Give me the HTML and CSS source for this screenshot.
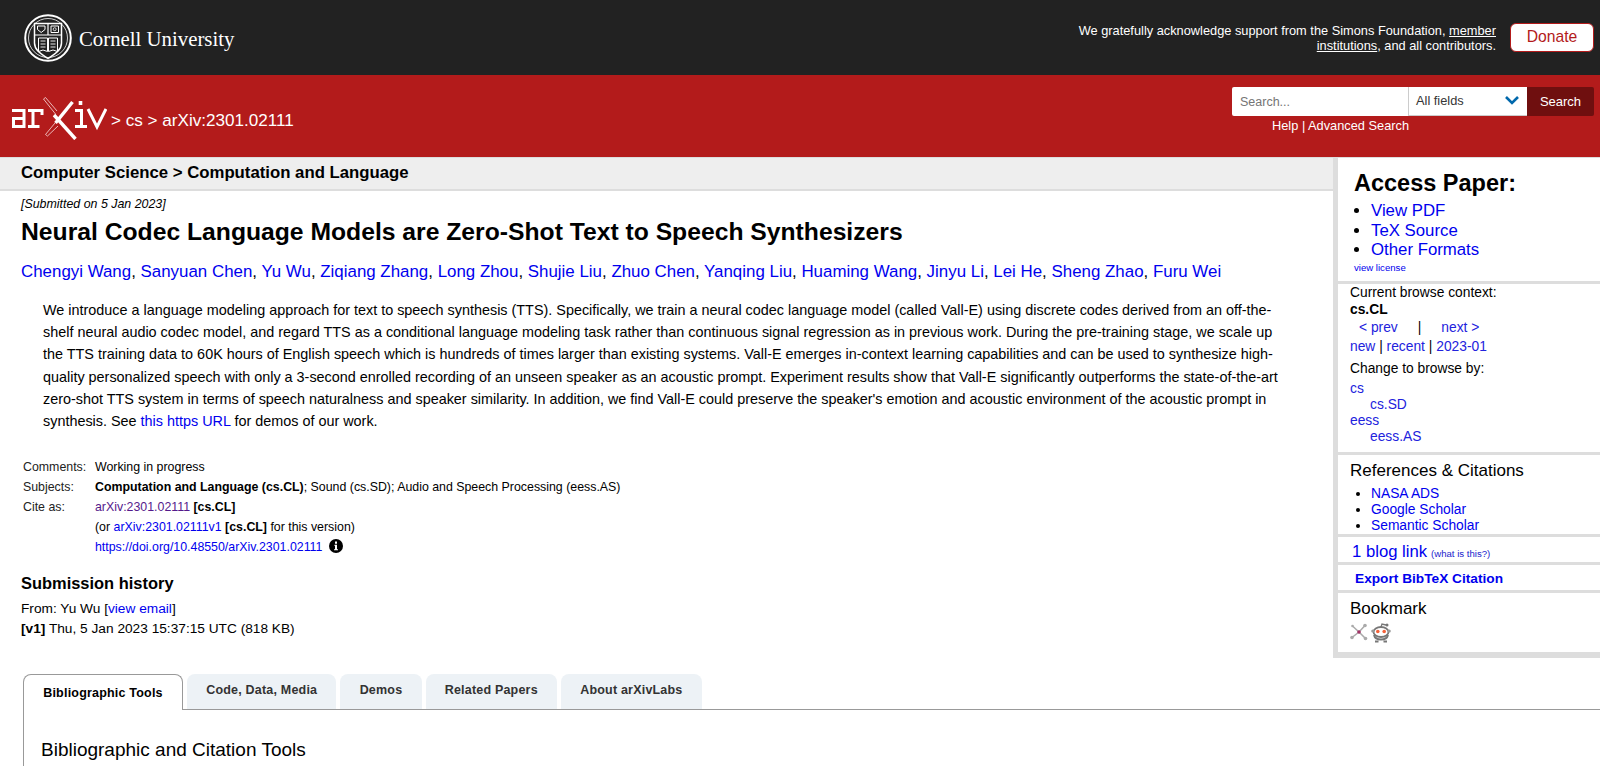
FILE: index.html
```html
<!DOCTYPE html>
<html lang="en">
  <head>
    <meta charset="UTF-8" />
    <title>Neural Codec Language Models are Zero-Shot Text to Speech Synthesizers</title>
    <link rel="stylesheet" href="styles.css">
  </head>

  <body>
    <header class="cu-banner">
      <a class="cu-logo" href="#">
        <svg class="cu-seal" width="48" height="48" viewBox="0 0 48 48" fill="none" stroke="#fff">
          <circle cx="24" cy="24" r="22.800" stroke-width="2" />
          <circle cx="24" cy="24" r="19.500" stroke-width="0.800" />
          <path d="M10.500 9.500H37.500V29C37.500 37 29 41 24 44.500C19 41 10.500 37 10.500 29Z" stroke-width="1.500" />
          <path d="M10.500 21H37.500M24 9.500V21" stroke-width="1.200" />
          <path d="M13.500 12H21V15.500L17.200 18.500L13.500 15.500ZM27 12H34.500V18.500H27Z" stroke-width="1" />
          <circle cx="30.700" cy="15.200" r="1.500" stroke-width="0.800" />
          <path d="M14.500 24H23.500V37.500L19 36L14.500 37.500ZM24.500 24H33.500V37.500L29 36L24.500 37.500Z" stroke-width="1" />
          <path d="M16.500 27H21.500M16.500 30H21.500M16.500 33H21.500M26.500 27H31.500M26.500 30H31.500M26.500 33H31.500" stroke-width="0.900" />
        </svg>
        <span class="cu-name">Cornell University</span>
      </a>
      <div class="support">
        <p class="support-text">We gratefully acknowledge support from the Simons Foundation, <a href="#">member institutions</a>, and all contributors.</p>
        <a class="donate" href="#">Donate</a>
      </div>
    </header>

    <div class="arxiv-bar">
      <div class="crumbs">
        <svg class="arxiv-logo" width="97" height="44" viewBox="0 0 97 44" fill="none" stroke="#fff" stroke-width="3">
          <path d="M2 14.500H14V30.500H3.500V22.500H14" />
          <path d="M18 14.500H32V19M23 14.500V30.500M18 30.500H29.500" />
          <path d="M65 14.500H71.500V30.500M65 30.500H77" />
          <path d="M70.500 5V9" stroke-width="3.600" />
          <path d="M78 13L87 31L96 13" />
          <path d="M44 19L65.500 43" stroke-width="3.400" />
          <path d="M62.500 6L45.500 27" stroke-width="3.400" />
          <path d="M45.500 18L33.500 3L35.500 1.500L47 15" stroke-width="0.900" stroke="#f0c8c8" />
          <path d="M45 27L35.500 38.500L37.500 40L48 30" stroke-width="0.900" stroke="#f0c8c8" />
        </svg>
        <span class="crumb-text">&gt; cs &gt; arXiv:2301.02111</span>
      </div>
      <div class="search-block">
        <form class="search-form">
          <input class="search-input" type="text" placeholder="Search..." />
          <div class="search-select">
            <span>All fields</span>
            <svg width="16" height="10" viewBox="0 0 16 10" fill="none" stroke="#0068ac" stroke-width="2.600"><path d="M2 2L8 8L14 2" /></svg>
          </div>
          <button class="search-btn" type="button">Search</button>
        </form>
        <div class="search-help"><a href="#">Help</a> | <a href="#">Advanced Search</a></div>
      </div>
    </div>

    <div class="page">
      <main class="abs">
        <div class="subheader">Computer Science &gt; Computation and Language</div>
        <div class="abs-body">
          <div class="dateline">[Submitted on 5 Jan 2023]</div>
          <h1 class="title">Neural Codec Language Models are Zero-Shot Text to Speech Synthesizers</h1>
          <div class="authors">
            <a href="#">Chengyi Wang</a>, <a href="#">Sanyuan Chen</a>, <a href="#">Yu Wu</a>, <a href="#">Ziqiang Zhang</a>, <a href="#">Long Zhou</a>, <a href="#">Shujie Liu</a>, <a href="#">Zhuo Chen</a>, <a href="#">Yanqing Liu</a>, <a href="#">Huaming Wang</a>, <a href="#">Jinyu Li</a>, <a href="#">Lei He</a>, <a href="#">Sheng Zhao</a>, <a href="#">Furu Wei</a>
          </div>
          <blockquote class="abstract">
            We introduce a language modeling approach for text to speech synthesis (TTS). Specifically, we train a neural codec language model (called Vall-E) using discrete codes derived from an off-the-shelf neural audio codec model, and regard TTS as a conditional language modeling task rather than continuous signal regression as in previous work. During the pre-training stage, we scale up the TTS training data to 60K hours of English speech which is hundreds of times larger than existing systems. Vall-E emerges in-context learning capabilities and can be used to synthesize high-quality personalized speech with only a 3-second enrolled recording of an unseen speaker as an acoustic prompt. Experiment results show that Vall-E significantly outperforms the state-of-the-art zero-shot TTS system in terms of speech naturalness and speaker similarity. In addition, we find Vall-E could preserve the speaker's emotion and acoustic environment of the acoustic prompt in synthesis. See <a href="#">this https URL</a> for demos of our work.
          </blockquote>
          <div class="meta">
            <div class="meta-label">Comments:</div>
            <div class="meta-value">Working in progress</div>
            <div class="meta-label">Subjects:</div>
            <div class="meta-value"><b>Computation and Language (cs.CL)</b>; Sound (cs.SD); Audio and Speech Processing (eess.AS)</div>
            <div class="meta-label">Cite as:</div>
            <div class="meta-value"><a class="visited" href="#">arXiv:2301.02111</a> <b>[cs.CL]</b></div>
            <div class="meta-label"></div>
            <div class="meta-value">(or <a href="#">arXiv:2301.02111v1</a> <b>[cs.CL]</b> for this version)</div>
            <div class="meta-label"></div>
            <div class="meta-value doi">
              <a href="#">https://doi.org/10.48550/arXiv.2301.02111</a>
              <svg width="14" height="14" viewBox="0 0 14 14">
                <circle cx="7" cy="7" r="7" fill="#000" />
                <path d="M5.500 5.800H8V10.200H9V11.300H5V10.200H6V6.900H5.500Z M6 2.600H8V4.700H6Z" fill="#fff" />
              </svg>
            </div>
          </div>
          <h2 class="history-title">Submission history</h2>
          <div class="history">
            From: Yu Wu [<a href="#">view email</a>]<br />
            <b>[v1]</b> Thu, 5 Jan 2023 15:37:15 UTC (818 KB)
          </div>
        </div>
      </main>

      <aside class="extra">
        <section class="box access">
          <h2>Access Paper:</h2>
          <ul>
            <li><a href="#">View PDF</a></li>
            <li><a href="#">TeX Source</a></li>
            <li><a href="#">Other Formats</a></li>
          </ul>
          <a class="license" href="#">view license</a>
        </section>
        <section class="box browse">
          <div>Current browse context:</div>
          <div class="context"><b>cs.CL</b></div>
          <div class="prevnext"><a href="#">&lt;&nbsp;prev</a><span>|</span><a href="#">next&nbsp;&gt;</a></div>
          <div class="switch"><a href="#">new</a> | <a href="#">recent</a> | <a href="#">2023-01</a></div>
          <div class="change">Change to browse by:</div>
          <div class="cats">
            <a href="#">cs</a>
            <a class="sub" href="#">cs.SD</a>
            <a href="#">eess</a>
            <a class="sub" href="#">eess.AS</a>
          </div>
        </section>
        <section class="box refs">
          <h3>References &amp; Citations</h3>
          <ul>
            <li><a href="#">NASA ADS</a></li>
            <li><a href="#">Google Scholar</a></li>
            <li><a href="#">Semantic Scholar</a></li>
          </ul>
        </section>
        <section class="box blog"><a class="blog-link" href="#">1 blog link</a> <a class="what" href="#">(what is this?)</a></section>
        <section class="box bibtex"><a href="#">Export BibTeX Citation</a></section>
        <section class="box bookmark">
          <h3>Bookmark</h3>
          <div class="bookmark-icons">
            <svg width="18" height="18" viewBox="0 0 18 18" fill="none" stroke="#aaa" stroke-width="1.500">
              <path d="M9 9L2.500 3M9 9L15 2.500M9 9L2 14.500M9 9L15.500 15.500" />
              <circle cx="2.500" cy="3" r="1.300" fill="#aaa" stroke="none" />
              <circle cx="15" cy="2.500" r="1.800" fill="#aaa" stroke="none" />
              <circle cx="2" cy="14.500" r="1.800" fill="#aaa" stroke="none" />
              <circle cx="15.500" cy="15.500" r="1.800" fill="#aaa" stroke="none" />
              <circle cx="9" cy="9" r="1.800" fill="#a33366" stroke="none" />
            </svg>
            <svg width="20" height="21" viewBox="0 0 20 21">
              <path d="M4 18.500H7.500M12.500 18.500H16M3 12C4 16 7 16.500 10 16.500C13 16.500 16 16 17 12" fill="none" stroke="#777" stroke-width="2" />
              <ellipse cx="10" cy="9" rx="7.500" ry="5" fill="#fff" stroke="#777" stroke-width="1.800" />
              <path d="M10 4L11 1L15 2" fill="none" stroke="#777" stroke-width="1.300" />
              <circle cx="16" cy="2" r="1.500" fill="#777" />
              <circle cx="1.800" cy="8" r="1.600" fill="#999" />
              <circle cx="18.200" cy="8" r="1.600" fill="#999" />
              <circle cx="6.800" cy="8.500" r="1.800" fill="#f4623a" />
              <circle cx="13.200" cy="8.500" r="1.800" fill="#f4623a" />
            </svg>
          </div>
        </section>
      </aside>
    </div>

    <nav class="labs-tabs">
      <a class="tab active" href="#">Bibliographic Tools</a>
      <a class="tab" href="#">Code, Data, Media</a>
      <a class="tab" href="#">Demos</a>
      <a class="tab" href="#">Related Papers</a>
      <a class="tab" href="#">About arXivLabs</a>
    </nav>
    <section class="labs-panel">
      <h2>Bibliographic and Citation Tools</h2>
    </section>
  </body>
</html>
```

FILE: styles.css
```css
* {
  box-sizing: border-box;
}

body {
  margin: 0;
  font-family: "Liberation Sans", Arial, Helvetica, sans-serif;
  font-size: 14px;
  color: #000;
  background-color: #fff;
}

a {
  color: #0000ee;
  text-decoration: none;
}

h1,
h2,
h3,
p,
ul,
blockquote {
  margin: 0;
}

/* top banners */
.cu-banner {
  display: flex;
  justify-content: space-between;
  align-items: center;
  height: 75px;
  padding: 0 6px 0 24px;
  background-color: #222222;
  color: #fff;
}

.cu-logo {
  display: flex;
  align-items: center;
  gap: 7px;
}

.cu-name {
  margin-top: 3px;
  font-family: "Liberation Serif", "Times New Roman", serif;
  font-size: 20.800px;
  color: #fff;
}

.support {
  display: flex;
  align-items: center;
  gap: 14px;
}

.support-text {
  width: 440px;
  margin-top: 2px;
  font-size: 12.800px;
  line-height: 14.300px;
  text-align: right;
}

.support-text a {
  color: #fff;
  text-decoration: underline;
}

.donate {
  width: 84px;
  height: 29px;
  border-radius: 6px;
  border: 1px solid #b31b1b;
  background-color: #fff;
  color: #b31b1b;
  font-size: 15.700px;
  line-height: 25px;
  text-align: center;
}

.arxiv-bar {
  display: flex;
  justify-content: space-between;
  height: 82px;
  padding: 12px 6px 0 10px;
  background-color: #b31b1b;
  color: #fff;
}

.crumbs {
  display: flex;
  align-items: center;
  align-self: flex-start;
  gap: 4px;
  height: 44px;
  margin-top: 9px;
}

.crumb-text {
  margin-top: 6px;
  font-size: 17.100px;
}

.search-form {
  display: flex;
  height: 29px;
}

.search-input {
  width: 176px;
  height: 29px;
  padding: 0 8px;
  border: none;
  border-radius: 2px 0 0 2px;
  background-color: #fff;
  font-family: inherit;
  font-size: 12.500px;
  outline: none;
}

.search-input::placeholder {
  color: #757575;
}

.search-select {
  display: flex;
  justify-content: space-between;
  align-items: center;
  width: 119px;
  padding: 0 7px 2px 7px;
  border-left: 1px solid #ccc;
  border-bottom: 1px solid #ccc;
  background-color: #fff;
  color: #363636;
  font-size: 12.800px;
}

.search-btn {
  width: 67px;
  height: 29px;
  padding: 0;
  border: none;
  border-radius: 0 2px 2px 0;
  background-color: #6f0f0f;
  color: #fff;
  font-family: inherit;
  font-size: 13px;
}

.search-help {
  margin-top: 2px;
  padding-left: 40px;
  font-size: 12.800px;
  line-height: 15px;
}

.search-help a {
  color: #fff;
}

/* main two columns */
.page {
  display: flex;
  align-items: flex-start;
  border-top: 1px solid #ddd;
}

.abs {
  flex: 1;
  min-width: 0;
}

.subheader {
  height: 33px;
  padding-left: 21px;
  border-top: 1px solid #eee;
  border-bottom: 2px solid #ddd;
  background-color: #eeeeee;
  font-size: 16.750px;
  font-weight: bold;
  line-height: 27px;
}

.abs-body {
  padding: 0 49px 0 21px;
}

.dateline {
  margin-top: 6px;
  font-size: 12.400px;
  font-style: italic;
  line-height: 14px;
}

.title {
  margin-top: 6px;
  font-size: 24.700px;
  line-height: 29px;
}

.authors {
  margin-top: 16px;
  font-size: 16.900px;
  line-height: 20px;
}

.abstract {
  margin: 17px 0 0 22px;
  font-size: 14.400px;
  line-height: 22.200px;
}

.meta {
  display: grid;
  grid-template-columns: 72px 1fr;
  grid-auto-rows: 20px;
  margin: 25px 0 0 2px;
  font-size: 12.360px;
  line-height: 20px;
}

.meta-label {
  color: #222;
}

.visited {
  color: #551a8b;
}

.doi svg {
  margin-left: 3px;
  vertical-align: -2px;
}

.history-title {
  margin-top: 16px;
  font-size: 16.450px;
  line-height: 20px;
}

.history {
  margin-top: 6px;
  font-size: 13.700px;
  line-height: 20px;
}

/* right sidebar */
.extra {
  flex: 0 0 267px;
  height: 500px;
  border-left: 5px solid #dddddd;
  border-bottom: 6px solid #dddddd;
  background-color: #fff;
}

.box {
  padding-left: 12px;
  border-bottom: 3px solid #dddddd;
}

.access {
  height: 126px;
  padding-left: 16px;
}

.access h2 {
  padding-top: 13px;
  font-size: 23.500px;
  line-height: 25px;
}

.access ul {
  margin-top: 5px;
  padding-left: 17px;
  font-size: 16.800px;
  line-height: 19.500px;
}

.license {
  display: block;
  margin-top: 1px;
  font-size: 9.600px;
  line-height: 14px;
}

.browse {
  height: 171px;
  padding-top: 1px;
  font-size: 13.800px;
  line-height: 16px;
}

.browse a {
  color: #2222dd;
}

.context {
  margin-top: 1px;
}

.prevnext {
  display: flex;
  gap: 20px;
  margin-top: 1px;
  padding-left: 9px;
  line-height: 18px;
}

.switch {
  line-height: 18px;
  margin-top: 1px;
}

.change {
  margin-top: 4px;
  line-height: 18px;
}

.cats {
  display: flex;
  flex-direction: column;
  align-items: flex-start;
  line-height: 16px;
  margin-top: 3px;
}

.cats .sub {
  margin-left: 20px;
}

.refs {
  height: 82px;
}

.refs h3 {
  padding-top: 6px;
  font-size: 17px;
  font-weight: normal;
  line-height: 19px;
}

.refs ul {
  margin-top: 6px;
  padding-left: 21px;
  font-size: 13.800px;
  line-height: 16px;
}

.blog {
  height: 28px;
  padding-top: 3px;
  padding-left: 14px;
  line-height: 24px;
}

.blog-link {
  font-size: 16.700px;
}

.what {
  font-size: 9.600px;
  color: #2222cc;
}

.bibtex {
  height: 28px;
  padding-left: 17px;
  font-size: 13.700px;
  font-weight: bold;
  line-height: 28px;
}

.bookmark {
  border-bottom: none;
}

.bookmark h3 {
  padding-top: 6px;
  font-size: 17px;
  font-weight: normal;
  line-height: 20px;
}

.bookmark-icons {
  display: flex;
  gap: 3px;
  margin-top: 4px;
}

/* labs tabs */
.labs-tabs {
  display: flex;
  gap: 4px;
  height: 35px;
  margin: 16px 0 0 23px;
}

.tab {
  height: 35px;
  padding: 0 19.200px;
  border-radius: 8px 8px 0 0;
  background-color: #edf2f6;
  color: #333;
  font-size: 12.500px;
  font-weight: bold;
  line-height: 33px;
  letter-spacing: 0.200px;
}

.tab.active {
  position: relative;
  z-index: 1;
  height: 36px;
  width: 160px;
  padding: 0;
  border: 1px solid #999;
  border-bottom: none;
  background-color: #fff;
  color: #000;
  text-align: center;
  line-height: 36px;
}

.labs-panel {
  height: 57px;
  margin-left: 23px;
  padding: 29px 0 0 17px;
  border-top: 1px solid #999;
  border-left: 1px solid #999;
}

.labs-panel h2 {
  font-size: 19px;
  font-weight: normal;
  line-height: 22px;
}
```
